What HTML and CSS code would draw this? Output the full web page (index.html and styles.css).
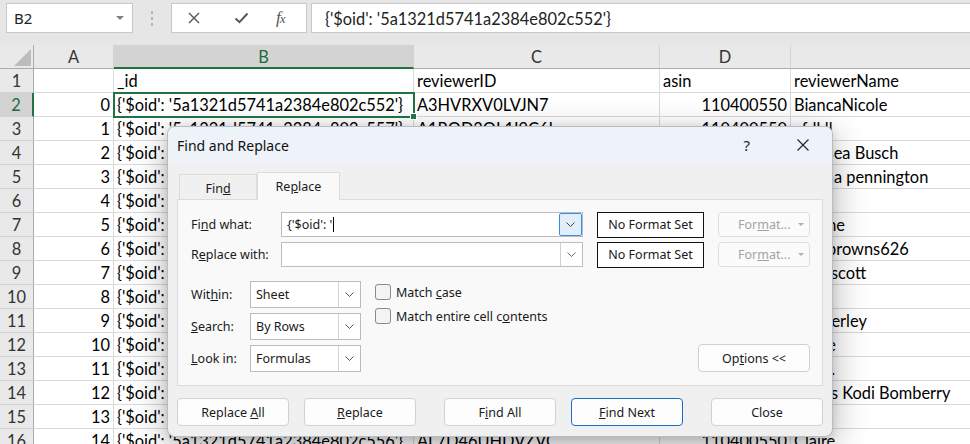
FILE: index.html
```html
<!DOCTYPE html>
<html>
<head>
<meta charset="utf-8">
<link rel="stylesheet" href="styles.css">
</head>
<body>
<div class="app">
  <div class="topbar">
    <div class="namebox"><span class="nb-text">B2</span><span class="nb-arrow"></span></div>
    <div class="grip"><i></i><i></i><i></i></div>
    <div class="fxbox">
      <svg class="ic-x" width="12" height="12" viewBox="0 0 12 12"><path d="M1 1L11 11M11 1L1 11" stroke="#555" stroke-width="1.4" fill="none"/></svg>
      <svg class="ic-check" width="15" height="12" viewBox="0 0 15 12"><path d="M1.5 6.5L5.5 10.2L13.5 1.5" stroke="#555" stroke-width="2" fill="none"/></svg>
      <span class="fx">f<span class="fx-x">x</span></span>
    </div>
    <div class="formula">{'$oid': '5a1321d5741a2384e802c552'}</div>
  </div>

  <div class="sheet">
    <div class="hd corner"><span class="tri"></span></div>
    <div class="hd">A</div>
    <div class="hd sel">B</div>
    <div class="hd">C</div>
    <div class="hd">D</div>
    <div class="hd"></div>

    <div class="rh">1</div><div class="c"></div><div class="c">_id</div><div class="c">reviewerID</div><div class="c">asin</div><div class="c">reviewerName</div>
    <div class="rh sel">2</div><div class="c r">0</div><div class="c active">{'$oid': '5a1321d5741a2384e802c552'}</div><div class="c">A3HVRXV0LVJN7</div><div class="c r">110400550</div><div class="c">BiancaNicole</div>
    <div class="rh">3</div><div class="c r">1</div><div class="c">{'$oid': '5a1321d5741a2384e802c557'}</div><div class="c">A1RQD3QL1I9C6L</div><div class="c r">110400550</div><div class="c">cfdkll</div>
    <div class="rh">4</div><div class="c r">2</div><div class="c">{'$oid': '5a1321d5741a2384e802c553'}</div><div class="c">A2PJ4JMD0QWAUS</div><div class="c r">110400550</div><div class="c">Chelsea Busch</div>
    <div class="rh">5</div><div class="c r">3</div><div class="c">{'$oid': '5a1321d5741a2384e802c554'}</div><div class="c">A3E7KQ9RZ3VUD2</div><div class="c r">110400550</div><div class="c">Donna pennington</div>
    <div class="rh">6</div><div class="c r">4</div><div class="c">{'$oid': '5a1321d5741a2384e802c555'}</div><div class="c">A1VDQ0TKJ8HKX7</div><div class="c r">110400550</div><div class="c">Jo</div>
    <div class="rh">7</div><div class="c r">5</div><div class="c">{'$oid': '5a1321d5741a2384e802c558'}</div><div class="c">A2OQ9BXKA1JZ8N</div><div class="c r">110400550</div><div class="c">Joanne</div>
    <div class="rh">8</div><div class="c r">6</div><div class="c">{'$oid': '5a1321d5741a2384e802c559'}</div><div class="c">A1WKE4TQ7XFJ5G</div><div class="c r">110400550</div><div class="c">tigerbrowns626</div>
    <div class="rh">9</div><div class="c r">7</div><div class="c">{'$oid': '5a1321d5741a2384e802c55a'}</div><div class="c">A3JT8NS6UD9PLW</div><div class="c r">110400550</div><div class="c">mprescott</div>
    <div class="rh">10</div><div class="c r">8</div><div class="c">{'$oid': '5a1321d5741a2384e802c55b'}</div><div class="c">A2HNC5R0YXL3EQ</div><div class="c r">110400550</div><div class="c">Lu</div>
    <div class="rh">11</div><div class="c r">9</div><div class="c">{'$oid': '5a1321d5741a2384e802c55c'}</div><div class="c">A1T0ZB3MWQ6RVJ</div><div class="c r">110400550</div><div class="c">Kimberley</div>
    <div class="rh">12</div><div class="c r">10</div><div class="c">{'$oid': '5a1321d5741a2384e802c55d'}</div><div class="c">A3U6FYZ2LPK9DA</div><div class="c r">110400550</div><div class="c">Annie</div>
    <div class="rh">13</div><div class="c r">11</div><div class="c">{'$oid': '5a1321d5741a2384e802c55e'}</div><div class="c">A2B8XRVJ4WQ1MO</div><div class="c r">110400550</div><div class="c">Kay J.</div>
    <div class="rh">14</div><div class="c r">12</div><div class="c">{'$oid': '5a1321d5741a2384e802c55f'}</div><div class="c">A1Q5KDWH9NU2ZT</div><div class="c r">110400550</div><div class="c">James Kodi Bomberry</div>
    <div class="rh">15</div><div class="c r">13</div><div class="c">{'$oid': '5a1321d5741a2384e802c560'}</div><div class="c">A3M2EG7YTL0SXC</div><div class="c r">110400550</div><div class="c">Te</div>
    <div class="rh">16</div><div class="c r">14</div><div class="c">{'$oid': '5a1321d5741a2384e802c556'}</div><div class="c">AL7D46UHDVZVC</div><div class="c r">110400550</div><div class="c">Claire</div>
  </div>

  <div class="dialog">
    <div class="titlebar">
      <span class="title">Find and Replace</span>
      <span class="help">?</span>
      <svg class="close" width="12" height="12" viewBox="0 0 12 12"><path d="M0.5 0.5L11.5 11.5M11.5 0.5L0.5 11.5" stroke="#222" stroke-width="1.1" fill="none"/></svg>
    </div>
    <div class="dbody">
      <div class="tabs">
        <div class="tab"><span>Fin<u>d</u></span></div>
        <div class="tab active"><span>Re<u>p</u>lace</span></div>
      </div>
      <div class="panel">
        <div class="frow">
          <label class="flabel">Fi<u>n</u>d what:</label>
          <div class="combo">
            <span class="ctext"><span>{'$oid': '</span><span class="caret"></span></span>
            <span class="dd focus"><svg width="9" height="5" viewBox="0 0 9 5"><path d="M0.5 0.5L4.5 4.5L8.5 0.5" stroke="#444" fill="none"/></svg></span>
          </div>
          <div class="nofmt">No Format Set</div>
          <div class="fmtbtn"><span>For<u>m</u>at...</span><i class="mini-tri"></i></div>
        </div>
        <div class="frow">
          <label class="flabel">R<u>e</u>place with:</label>
          <div class="combo">
            <span class="ctext"></span>
            <span class="dd"><svg width="9" height="5" viewBox="0 0 9 5"><path d="M0.5 0.5L4.5 4.5L8.5 0.5" stroke="#666" fill="none"/></svg></span>
          </div>
          <div class="nofmt">No Format Set</div>
          <div class="fmtbtn"><span>For<u>m</u>at...</span><i class="mini-tri"></i></div>
        </div>
        <div class="opts">
          <div class="selcol">
            <div class="srow"><label class="slabel">Wit<u>h</u>in:</label><div class="select"><span class="stext">Sheet</span><span class="sdd"><svg width="9" height="5" viewBox="0 0 9 5"><path d="M0.5 0.5L4.5 4.5L8.5 0.5" stroke="#555" fill="none"/></svg></span></div></div>
            <div class="srow"><label class="slabel"><u>S</u>earch:</label><div class="select"><span class="stext">By Rows</span><span class="sdd"><svg width="9" height="5" viewBox="0 0 9 5"><path d="M0.5 0.5L4.5 4.5L8.5 0.5" stroke="#555" fill="none"/></svg></span></div></div>
            <div class="srow"><label class="slabel"><u>L</u>ook in:</label><div class="select"><span class="stext">Formulas</span><span class="sdd"><svg width="9" height="5" viewBox="0 0 9 5"><path d="M0.5 0.5L4.5 4.5L8.5 0.5" stroke="#555" fill="none"/></svg></span></div></div>
          </div>
          <div class="checks">
            <div class="chk"><span class="box"></span><span>Match <u>c</u>ase</span></div>
            <div class="chk"><span class="box"></span><span>Match entire cell c<u>o</u>ntents</span></div>
          </div>
          <div class="btn optbtn"><span>Op<u>t</u>ions &lt;&lt;</span></div>
        </div>
      </div>
      <div class="buttons">
        <div class="btn"><span>Replace <u>A</u>ll</span></div>
        <div class="btn gap-s"><span><u>R</u>eplace</span></div>
        <div class="btn gap-l"><span>F<u>i</u>nd All</span></div>
        <div class="btn gap-s default"><span><u>F</u>ind Next</span></div>
        <div class="btn gap-l"><span>Close</span></div>
      </div>
    </div>
  </div>
</div>
</body>
</html>
```

FILE: styles.css
```css
html, body {
  margin: 0;
  padding: 0;
  overflow: hidden;
  background: #ffffff;
}

.app {
  position: relative;
  width: 970px;
  height: 444px;
  overflow: hidden;
}

/* ---------- formula bar ---------- */
.topbar {
  height: 45px;
  box-sizing: border-box;
  background: #e6e6e6;
  display: flex;
  align-items: flex-start;
  padding: 3px 0 0 6px;
}

.namebox {
  width: 127px;
  height: 30px;
  box-sizing: border-box;
  background: #fff;
  border: 1px solid #c8c8c8;
  display: flex;
  align-items: center;
  padding-left: 7px;
  font-family: "Noto Sans", sans-serif;
  font-size: 15px;
  color: #222;
}

.nb-arrow {
  margin-left: auto;
  margin-right: 8px;
  width: 0;
  height: 0;
  border-left: 4px solid transparent;
  border-right: 4px solid transparent;
  border-top: 4px solid #808080;
}

.grip {
  width: 38px;
  height: 30px;
  display: flex;
  flex-direction: column;
  align-items: center;
  justify-content: center;
  gap: 3px;
}

.grip i {
  display: block;
  width: 2px;
  height: 3px;
  background: #b5b5b5;
}

.fxbox {
  width: 136px;
  height: 30px;
  box-sizing: border-box;
  background: #fff;
  border: 1px solid #c8c8c8;
  display: flex;
  align-items: center;
  padding-left: 16px;
}

.ic-check {
  margin-left: 34px;
}

.fx {
  margin-left: 27px;
  font-family: "Liberation Serif", serif;
  font-style: italic;
  font-size: 17px;
  color: #555;
  letter-spacing: -1px;
}

.fx-x {
  font-size: 13px;
}

.formula {
  flex: 1;
  margin-left: 4px;
  margin-right: -2px;
  height: 30px;
  box-sizing: border-box;
  background: #fff;
  border: 1px solid #c8c8c8;
  display: flex;
  align-items: center;
  padding-left: 13px;
  font-family: "Lato", sans-serif;
  font-size: 16.4px;
  color: #222;
}

/* ---------- sheet ---------- */
.sheet {
  display: grid;
  grid-template-columns: 34px 80px 300px 246px 131px 400px;
  grid-auto-rows: 24px;
  font-family: "Lato", sans-serif;
  font-size: 16.4px;
  color: #000;
}

.hd {
  background: #e9e9e9;
  border-right: 1px solid #d4d4d4;
  border-bottom: 1px solid #ababab;
  box-sizing: border-box;
  display: flex;
  align-items: center;
  justify-content: center;
  color: #333;
}

.hd.sel {
  background: #d3d3d3;
  color: #1b6b3a;
  border-bottom: 2px solid #217346;
}

.hd.corner {
  position: relative;
  border-right: 1px solid #ababab;
}

.tri {
  position: absolute;
  right: 2px;
  bottom: 2px;
  width: 0;
  height: 0;
  border-left: 17px solid transparent;
  border-bottom: 17px solid #bcbcbc;
}

.rh {
  background: #e9e9e9;
  border-right: 1px solid #ababab;
  border-bottom: 1px solid #d4d4d4;
  box-sizing: border-box;
  display: flex;
  align-items: center;
  justify-content: center;
  color: #333;
}

.rh.sel {
  background: #d3d3d3;
  color: #1b6b3a;
  border-right: 2px solid #217346;
}

.c {
  background: #fff;
  border-right: 1px solid #dadada;
  border-bottom: 1px solid #dadada;
  box-sizing: border-box;
  display: flex;
  align-items: center;
  padding: 0 3px;
  white-space: nowrap;
  overflow: hidden;
}

.c.r {
  justify-content: flex-end;
}

.c.active {
  position: relative;
  overflow: visible;
}

.c.active::after {
  content: "";
  position: absolute;
  left: -1px;
  top: -1px;
  right: -2px;
  bottom: -2px;
  border: 2px solid #217346;
}

.c.active::before {
  content: "";
  position: absolute;
  right: -4px;
  bottom: -4px;
  width: 5px;
  height: 5px;
  background: #217346;
  border: 1px solid #fff;
  z-index: 2;
}

/* ---------- dialog ---------- */
.dialog {
  position: absolute;
  left: 167px;
  top: 126px;
  width: 666px;
  height: 311px;
  box-sizing: border-box;
  border: 1px solid #b9bcc2;
  border-radius: 8px;
  background: #f0f0f0;
  box-shadow: 0 10px 36px rgba(0, 0, 0, 0.30), 0 2px 8px rgba(0, 0, 0, 0.12);
  overflow: hidden;
  font-family: "Noto Sans", sans-serif;
  font-size: 12.5px;
  color: #1a1a1a;
  display: flex;
  flex-direction: column;
}

.titlebar {
  height: 36px;
  flex: none;
  background: #eef2f9;
  display: flex;
  align-items: center;
  padding-left: 9px;
}

.title {
  font-size: 14px;
  color: #111;
}

.help {
  margin-left: auto;
  margin-right: 47px;
  font-size: 15px;
  color: #222;
}

.close {
  margin-right: 23px;
}

.dbody {
  flex: 1;
  padding: 9px 9px 0 9px;
  display: flex;
  flex-direction: column;
}

.tabs {
  height: 27px;
  display: flex;
  align-items: flex-end;
  padding-left: 2px;
}

.tab {
  width: 78px;
  height: 25px;
  box-sizing: border-box;
  border: 1px solid #dcdcdc;
  border-bottom: none;
  background: #f0f0f0;
  display: flex;
  align-items: center;
  justify-content: center;
  padding-top: 2px;
}

.tab.active {
  width: 83px;
  height: 28px;
  margin-bottom: -1px;
  background: #f9f9f9;
  position: relative;
  z-index: 1;
  padding-top: 0;
}

.panel {
  height: 187px;
  box-sizing: border-box;
  border: 1px solid #dcdcdc;
  background: #f9f9f9;
  padding: 12px 12px 0 13px;
}

.frow {
  display: flex;
  align-items: center;
  height: 25px;
}

.frow + .frow {
  margin-top: 5px;
}

.flabel {
  width: 90px;
  flex: none;
}

.combo {
  width: 302px;
  height: 25px;
  box-sizing: border-box;
  border: 1px solid #bcbcbc;
  background: #fff;
  display: flex;
  align-items: stretch;
}

.ctext {
  flex: 1;
  display: flex;
  align-items: center;
  padding-left: 5px;
  white-space: pre;
}

.caret {
  display: inline-block;
  width: 1px;
  height: 15px;
  background: #000;
  margin-left: 1px;
}

.dd {
  width: 21px;
  border-left: 1px solid #d0d0d0;
  display: flex;
  align-items: center;
  justify-content: center;
}

.dd.focus {
  border: 1px solid #3a8ee6;
  border-radius: 2px;
  background: #e3eefb;
}

.nofmt {
  width: 107px;
  height: 26px;
  margin-left: 14px;
  box-sizing: border-box;
  border: 1px solid #111;
  background: #fff;
  display: flex;
  align-items: center;
  justify-content: center;
}

.fmtbtn {
  width: 92px;
  height: 25px;
  margin-left: 14px;
  box-sizing: border-box;
  border: 1px solid #dedede;
  border-radius: 4px;
  background: #fbfbfb;
  color: #a3a3a3;
  display: flex;
  align-items: center;
  padding-left: 19px;
}

.mini-tri {
  margin-left: auto;
  margin-right: 5px;
  width: 0;
  height: 0;
  border-left: 3px solid transparent;
  border-right: 3px solid transparent;
  border-top: 3px solid #b0b0b0;
}

.opts {
  display: flex;
  margin-top: 14px;
  height: 91px;
}

.selcol {
  display: flex;
  flex-direction: column;
  gap: 5px;
}

.srow {
  display: flex;
  align-items: center;
  height: 27px;
}

.slabel {
  width: 59px;
  flex: none;
}

.select {
  width: 111px;
  height: 27px;
  box-sizing: border-box;
  border: 1px solid #bcbcbc;
  background: #fff;
  display: flex;
  align-items: stretch;
}

.stext {
  flex: 1;
  display: flex;
  align-items: center;
  padding-left: 5px;
}

.sdd {
  width: 21px;
  border-left: 1px solid #d4d4d4;
  display: flex;
  align-items: center;
  justify-content: center;
}

.checks {
  margin-left: 14px;
  padding-top: 3px;
  display: flex;
  flex-direction: column;
  gap: 8px;
}

.chk {
  display: flex;
  align-items: center;
  height: 16px;
}

.box {
  width: 16px;
  height: 16px;
  box-sizing: border-box;
  border: 1px solid #8a8a8a;
  border-radius: 3px;
  background: #f3f3f3;
  margin-right: 5px;
}

.btn {
  width: 112px;
  height: 28px;
  box-sizing: border-box;
  border: 1px solid #d0d0d0;
  border-radius: 4px;
  background: #fdfdfd;
  display: flex;
  align-items: center;
  justify-content: center;
  flex: none;
}

.optbtn {
  margin-left: auto;
  align-self: flex-end;
  margin-right: 0;
}

.buttons {
  display: flex;
  margin-top: 12px;
}

.gap-s {
  margin-left: 15px;
}

.gap-l {
  margin-left: 28px;
}

.btn.default {
  border-color: #1a6fc4;
}
```
